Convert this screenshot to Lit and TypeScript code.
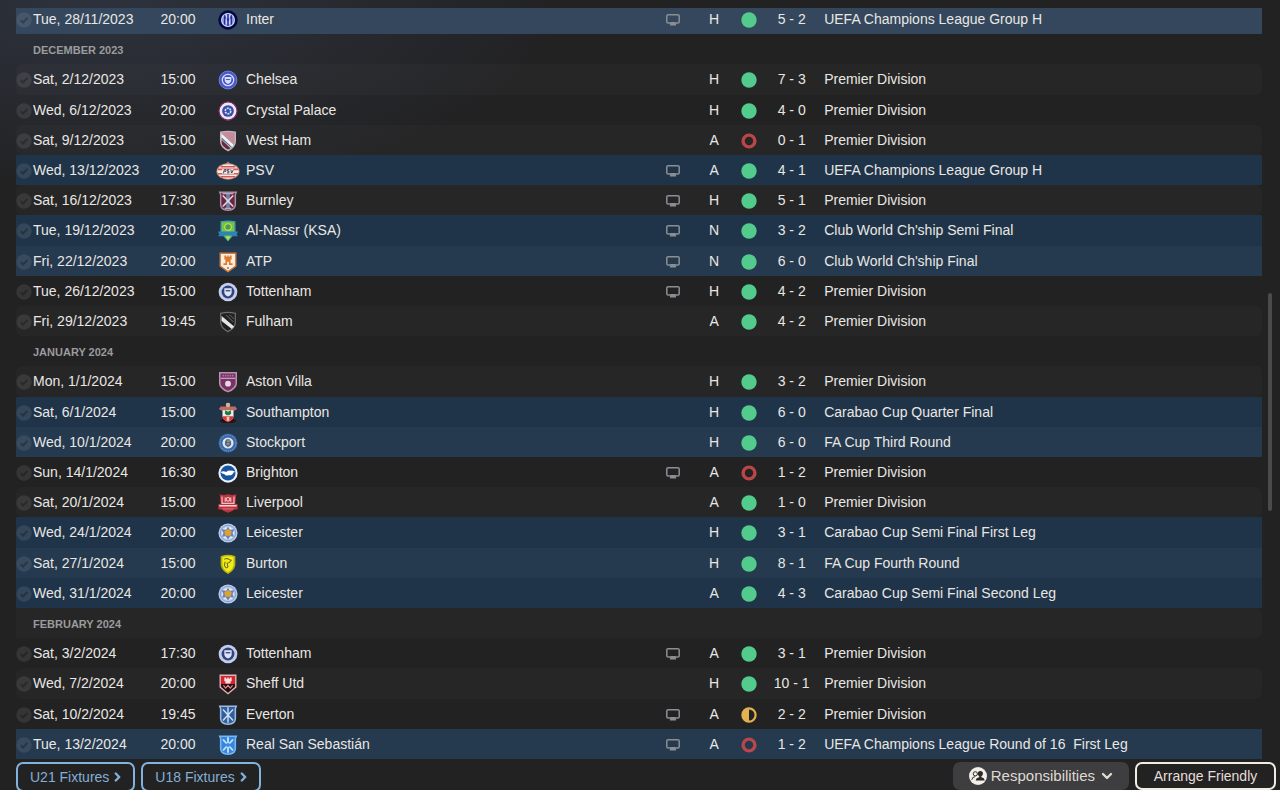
import { LitElement, html, svg, css, nothing, TemplateResult } from "lit";
import { customElement, property } from "lit/decorators.js";
import { classMap } from "lit/directives/class-map.js";

type Result = "win" | "loss" | "draw";
interface Fixture {
  date: string; time: string; team: string; crest: string; tv?: boolean;
  venue: "H" | "A" | "N"; result: Result; score: string; comp: string; cup?: boolean; active?: boolean;
}
interface Month { title?: string; fixtures: Fixture[]; }

const PL = "Premier Division";
const CL = "UEFA Champions League Group H";

const MONTHS: Month[] = [
  { fixtures: [
    { date: "Tue, 28/11/2023", time: "20:00", team: "Inter", crest: "inter", tv: true, venue: "H", result: "win", score: "5 - 2", comp: CL, cup: true, active: true },
  ] },
  { title: "DECEMBER 2023", fixtures: [
    { date: "Sat, 2/12/2023", time: "15:00", team: "Chelsea", crest: "chelsea", venue: "H", result: "win", score: "7 - 3", comp: PL },
    { date: "Wed, 6/12/2023", time: "20:00", team: "Crystal Palace", crest: "palace", venue: "H", result: "win", score: "4 - 0", comp: PL },
    { date: "Sat, 9/12/2023", time: "15:00", team: "West Ham", crest: "westham", venue: "A", result: "loss", score: "0 - 1", comp: PL },
    { date: "Wed, 13/12/2023", time: "20:00", team: "PSV", crest: "psv", tv: true, venue: "A", result: "win", score: "4 - 1", comp: CL, cup: true },
    { date: "Sat, 16/12/2023", time: "17:30", team: "Burnley", crest: "burnley", tv: true, venue: "H", result: "win", score: "5 - 1", comp: PL },
    { date: "Tue, 19/12/2023", time: "20:00", team: "Al-Nassr (KSA)", crest: "nassr", tv: true, venue: "N", result: "win", score: "3 - 2", comp: "Club World Ch'ship Semi Final", cup: true },
    { date: "Fri, 22/12/2023", time: "20:00", team: "ATP", crest: "atp", tv: true, venue: "N", result: "win", score: "6 - 0", comp: "Club World Ch'ship Final", cup: true },
    { date: "Tue, 26/12/2023", time: "15:00", team: "Tottenham", crest: "tottenham", tv: true, venue: "H", result: "win", score: "4 - 2", comp: PL },
    { date: "Fri, 29/12/2023", time: "19:45", team: "Fulham", crest: "fulham", venue: "A", result: "win", score: "4 - 2", comp: PL },
  ] },
  { title: "JANUARY 2024", fixtures: [
    { date: "Mon, 1/1/2024", time: "15:00", team: "Aston Villa", crest: "villa", venue: "H", result: "win", score: "3 - 2", comp: PL },
    { date: "Sat, 6/1/2024", time: "15:00", team: "Southampton", crest: "southampton", venue: "H", result: "win", score: "6 - 0", comp: "Carabao Cup Quarter Final", cup: true },
    { date: "Wed, 10/1/2024", time: "20:00", team: "Stockport", crest: "stockport", venue: "H", result: "win", score: "6 - 0", comp: "FA Cup Third Round", cup: true },
    { date: "Sun, 14/1/2024", time: "16:30", team: "Brighton", crest: "brighton", tv: true, venue: "A", result: "loss", score: "1 - 2", comp: PL },
    { date: "Sat, 20/1/2024", time: "15:00", team: "Liverpool", crest: "liverpool", venue: "A", result: "win", score: "1 - 0", comp: PL },
    { date: "Wed, 24/1/2024", time: "20:00", team: "Leicester", crest: "leicester", venue: "H", result: "win", score: "3 - 1", comp: "Carabao Cup Semi Final First Leg", cup: true },
    { date: "Sat, 27/1/2024", time: "15:00", team: "Burton", crest: "burton", venue: "H", result: "win", score: "8 - 1", comp: "FA Cup Fourth Round", cup: true },
    { date: "Wed, 31/1/2024", time: "20:00", team: "Leicester", crest: "leicester", venue: "A", result: "win", score: "4 - 3", comp: "Carabao Cup Semi Final Second Leg", cup: true },
  ] },
  { title: "FEBRUARY 2024", fixtures: [
    { date: "Sat, 3/2/2024", time: "17:30", team: "Tottenham", crest: "tottenham", tv: true, venue: "A", result: "win", score: "3 - 1", comp: PL },
    { date: "Wed, 7/2/2024", time: "20:00", team: "Sheff Utd", crest: "sheffield", venue: "H", result: "win", score: "10 - 1", comp: PL },
    { date: "Sat, 10/2/2024", time: "19:45", team: "Everton", crest: "everton", tv: true, venue: "A", result: "draw", score: "2 - 2", comp: PL },
    { date: "Tue, 13/2/2024", time: "20:00", team: "Real San Sebastián", crest: "sebastian", tv: true, venue: "A", result: "loss", score: "1 - 2", comp: "UEFA Champions League Round of 16  First Leg", cup: true },
  ] },
];

const shield = "M4 2.5Q12 .5 20 2.5V12Q20 18.5 12 22.5Q4 18.5 4 12Z";
const tub = "M3 2.5H21L20 5V16Q20 21.5 12 22Q4 21.5 4 16V5Z";

const CRESTS: Record<string, TemplateResult> = {
  inter: svg`<circle cx="12" cy="12" r="10.6" fill="#04083f"/><circle cx="12" cy="12" r="7.6" fill="#e0e4ff"/><circle cx="12" cy="12" r="6.6" fill="#8d9bea"/><path d="M8.3 17V8L12 13l3.7-5v9M12 5.5v13" fill="none" stroke="#262f95" stroke-width="1.5"/><path d="M10.2 6.5v10M13.8 6.5v10" stroke="#eef0ff" stroke-width=".9"/>`,
  chelsea: svg`<circle cx="12" cy="12" r="10" fill="#4659c5"/><circle cx="12" cy="12" r="9.7" fill="none" stroke="#6e80e2" stroke-width="1"/><circle cx="12" cy="12" r="6.2" fill="#4051b4" stroke="#d6dcff" stroke-width="1.4"/><path d="M8.3 8.8h7.4v2.9q0 3-3.7 4.6-3.7-1.6-3.7-4.6z" fill="#d6dcff"/><path d="M9.7 11.5h4.6" stroke="#4051b4" stroke-width="1"/>`,
  palace: svg`<circle cx="12" cy="12" r="10" fill="#ece5f5"/><circle cx="12" cy="12" r="9.9" fill="none" stroke="#7b2458" stroke-width="1.4"/><circle cx="12" cy="12" r="6.4" fill="#3450a8"/><circle cx="12" cy="12" r="3" fill="#3450a8" stroke="#e8e2f4" stroke-width="1.8" stroke-dasharray="2.2 .9"/>`,
  westham: svg`<path d=${shield} fill="#c58b9d"/><path d="M5 8L16.500 19.500 12 21.500 5 17z" fill="#6b2742"/><path d="M4.500 3.500L19 17l-3.500 3.500L4.500 10z" fill="#eef1f3"/><path d="M5 9L16.500 19.500" stroke="#467087" stroke-width="1.2"/><path d=${shield} fill="none" stroke="#bdb5bd" stroke-width="1.5"/>`,
  psv: svg`<path d="M9 4.5L12 1.500l3 3z" fill="#b98474"/><ellipse cx="12" cy="12.5" rx="12.6" ry="9" fill="#b98a72"/><ellipse cx="12" cy="12.5" rx="11.6" ry="8" fill="#f4efed"/><path d="M4 7.300H20M1 10.200H23M1 15H23M4 18.200H20" stroke="#d9544c" stroke-width="1.7"/><path d="M5.500 10h13v5h-13z" fill="#f4efed"/><path d="M7 14.500l1-4h2l-.5 2H8M11 14h2v-1.800h-1.500v-1.700h2M15 10.500l1 3.700 2-3.700" fill="none" stroke="#34374f" stroke-width="1"/>`,
  burnley: svg`<path d=${tub} fill="#6a2540" stroke="#aa8fa6" stroke-width="1.6"/><path d="M12 3v18" stroke="#6686a8" stroke-width="4"/><path d="M6.3 6l11.4 12M17.7 6L6.3 18" stroke="#e4d3dc" stroke-width="1.8"/><path d="M8.5 20h7M6 4h12" stroke="#baa9bf" stroke-width="1.2"/>`,
  nassr: svg`<path d="M4.5 2Q12 .5 19.5 2V14L12 22.5 4.5 14z" fill="#77c24c" stroke="#3fa0a2" stroke-width="1.4"/><circle cx="12" cy="7.7" r="3.6" fill="#4a9b55" stroke="#c5e34c" stroke-width="1.3"/><path d="M1 12.5h22l-1.5 3.3 1.5 2H16v-1H8v1H1l1.5-2z" fill="#2d82b7"/><path d="M9 18h6l-3 4z" fill="#b4e349"/>`,
  atp: svg`<path d="M3.5 2.5h17V16.5L12 22.5 3.5 16.5z" fill="#f9ede2" stroke="#cc7b3c" stroke-width="1.5"/><path d="M8 5h2v1.2h1.2V5h1.6v1.2H14V5h2v4.3h-1.2v4H17v2h-4v-3.6h-2v3.6H7v-2h2.2v-4H8z" fill="#dd7a31"/><path d="M11 17.5h2v2h-2z" fill="#c98550"/>`,
  tottenham: svg`<circle cx="12" cy="12" r="10.2" fill="#c3cdee"/><circle cx="12" cy="12" r="7" fill="#31447b"/><path d="M8 8h8v4.2q0 3-4 4.8-4-1.8-4-4.8z" fill="#dce3f8"/><path d="M9.5 10.6h5" stroke="#31447b" stroke-width="1.4"/>`,
  fulham: svg`<path d=${shield} fill="#202020" stroke="#6c6c6c" stroke-width="1.4"/><path d="M5 5.500L18.7 17l-2.500 2.700L5 11z" fill="#e6e6e6"/><path d="M10 4.5l8 7.5M13.5 4l5 4.5" stroke="#555" stroke-width="1.2"/>`,
  villa: svg`<path d="M3 2h18v11q0 6-9 9.5Q3 19 3 13z" fill="#793263" stroke="#b890b3" stroke-width="1.7"/><path d="M4 8h16" stroke="#c4a0c2" stroke-width="1.4"/><path d="M6 5h12" stroke="#b277a4" stroke-width="1.8" stroke-dasharray="1.6 1"/><circle cx="12" cy="13.8" r="3.2" fill="#e5d8e8"/>`,
  southampton: svg`<ellipse cx="12" cy="20.5" rx="9" ry="2.5" fill="#33100d"/><path d="M10 1h4v4h6l2 3-5 2H7L2 8l2-3h6z" fill="#bd6d62"/><circle cx="12" cy="3.2" r="2.4" fill="#d6b393"/><path d="M6 9h12v7q-1 4-6 5.5Q7 20 6 16z" fill="#f3eeea"/><path d="M6 15.500h12q-1 4.500-6 6-5-1.500-6-6z" fill="#d33c35"/><path d="M10.500 16h3v4.500h-3z" fill="#f0c5bb"/><path d="M9 9l3 1.500L15 9l.5 3.500-2 2h-3l-2-2z" fill="#257a43"/>`,
  stockport: svg`<circle cx="12" cy="12" r="10.3" fill="#3a66a4"/><circle cx="12" cy="12" r="8.7" fill="none" stroke="#6f98cf" stroke-width="1.2" stroke-dasharray="1.5 1"/><circle cx="12" cy="12" r="6.1" fill="#dce5f1"/><path d="M8.7 10.5l1.8-2.5h3.2l1.7 2.5v3.8L12 16.7l-3.3-2.4z" fill="#48658d"/><path d="M11 10h3M10.5 13h3" stroke="#cba95b" stroke-width="1.2"/>`,
  brighton: svg`<circle cx="12" cy="12" r="10.5" fill="#e8f2ff"/><circle cx="12" cy="12" r="8.2" fill="#17549e"/><path d="M4 11q3-1.6 6 0 2-2 5-1.5 1.5-.8 3 .2l2 1.3-2 .4q-1 3.3-5.5 3.1Q9 15.4 8 13 6 13.3 4 11z" fill="#fff"/>`,
  liverpool: svg`<path d="M3 2.5Q7 4 12 2.5 17 4 21 2.5L20 13h2.5v6H19q-2.5 2-7 3.5Q7.5 21 5 19H1.5v-6H4z" fill="#bd3440"/><path d="M5.5 5v7.5h13V5M9 6v4.5M15 6v4.5" fill="none" stroke="#efc0c3" stroke-width="1.3"/><circle cx="12" cy="8" r="2" fill="none" stroke="#f3c8ca" stroke-width="1.2"/><path d="M2.5 15h19" stroke="#f5d5d7" stroke-width="1.7"/><path d="M6 18.5h12" stroke="#df7d84" stroke-width="1"/>`,
  leicester: svg`<circle cx="12" cy="12" r="10.4" fill="#bacced"/><circle cx="12" cy="12" r="8.4" fill="none" stroke="#8099cc" stroke-width="1"/><circle cx="12" cy="12" r="6.5" fill="#e8ecf5"/><path d="M12 5l2 3.5 5-.5-2 4 1.5 4-4-.5L12 19l-2.5-3.5-4 .5L7 12 5 8l5 .5z" fill="#6683bd"/><path d="M12 7.5l4 2.5-1.2 5H9.2L8 10z" fill="#dfa329"/>`,
  burton: svg`<path d="M4 3.5Q12 .5 20 3.5V13q-1 6-8 10Q5 19 4 13z" fill="#b8b60d"/><path d="M6 4.7Q12 2.5 18 4.7V13q-1 5-6 8-5-3-6-8z" fill="#f2ed1a"/><path d="M8 7q3-2 5 0l2.5 1-2 2.500-2.500.5 1 4-2 1.500M9 9.500l-1 3.500 1.500 3" fill="none" stroke="#6a6816" stroke-width="1.1"/>`,
  sheffield: svg`<path d="M3.5 2.5h17V15.5L12 22.5 3.5 15.5z" fill="#d3252f" stroke="#dfb5b7" stroke-width="1.5"/><path d="M4.5 12h15v3L12 21.5 4.5 15z" fill="#1d1213"/><path d="M8 5h2v1.2h1.2V5h1.6v1.2H14V5h2v4h-1.2v2.5H9.2V9H8z" fill="#f6dfe0"/><path d="M7 13.5l2.5 3 2.5-3 2.5 3 2.5-3" fill="none" stroke="#e9888c" stroke-width="1.3"/>`,
  everton: svg`<path d=${tub} fill="#315f9d" stroke="#9bbbe2" stroke-width="1.7"/><path d="M12 3.5v17M6.5 6l5.5 6 5.5-6M12 12l-5.5 6M12 12l5.5 6" fill="none" stroke="#cfe0f6" stroke-width="1.5"/>`,
  sebastian: svg`<path d=${tub} fill="#3487df" stroke="#7bb6f2" stroke-width="1.7"/><path d="M12 3.5v17M6.5 6l11 12M17.5 6l-11 12" stroke="#c4e2fc" stroke-width="2"/><circle cx="12" cy="12" r="2.3" fill="#3b8ce1"/>`,
};

const check = html`<svg class="check" viewBox="0 0 16 16" aria-hidden="true"><circle cx="8" cy="8" r="7.7"/><path d="M4.8 8.2l2.3 2.3 4.4-4.600"/></svg>`;
const tvIcon = html`<svg class="tv" viewBox="0 0 14 12" role="img" aria-label="Televised"><rect x=".8" y=".8" width="12.4" height="8.2" rx="1.3"/><path class="stand" d="M4.6 8h4.8l.8 3.400H3.8z"/></svg>`;
const status: Record<Result, TemplateResult> = {
  win: html`<svg class="status" viewBox="0 0 16 16" role="img" aria-label="Won"><circle cx="8" cy="8" r="7.7" fill="#52cb8d"/></svg>`,
  loss: html`<svg class="status" viewBox="0 0 16 16" role="img" aria-label="Lost"><circle cx="8" cy="8" r="5.9" fill="none" stroke="#b94749" stroke-width="3.4"/></svg>`,
  draw: html`<svg class="status" viewBox="0 0 16 16" role="img" aria-label="Drawn"><circle cx="8" cy="8" r="6.6" fill="none" stroke="#e3b14f" stroke-width="2.2"/><path d="M8 1.5a6.5 6.5 0 0 0 0 13z" fill="#e3b14f"/></svg>`,
};

@customElement("fixture-list")
class FixtureList extends LitElement {
  @property({ attribute: false }) months: Month[] = [];

  static styles = css`
    :host { display: block; overflow: hidden; }
    table {
      width: 100%; height: calc(100% + 4px); margin-top: -4px;
      table-layout: fixed; border-collapse: separate; border-spacing: 0;
      font-size: 14px; line-height: 20px; color: #e9e7e3;
    }
    .c-check { width: 17px; } .c-date { width: 113px; } .c-time { width: 64px; }
    .c-crest { width: 36px; } .c-team { width: 33%; } .c-tv { width: 32px; }
    .c-venue { width: 50px; } .c-result { width: 20px; } .c-score { width: 65px; }
    td, th { box-sizing: border-box; padding: 0; height: 30px; text-align: left; white-space: pre; vertical-align: middle; font-weight: 400; }
    .light > * { background: rgba(255, 255, 255, 0.02); }
    .light > :first-child { border-radius: 6px 0 0 6px; }
    .light > :last-child { border-radius: 0 6px 6px 0; }
    .cup > * { background: #203449; }
    .cup.light > * { background: #25394f; border-radius: 0; }
    .cup.active > * { background: #34475d; }
    .month th { padding: 2px 0 0 17px; font-size: 11px; font-weight: 700; color: #9b9b9c; }
    td.mid { text-align: center; }
    td.icon { padding-top: 2px; }
    svg { display: block; overflow: visible; }
    .icon svg { margin: 0 auto; }
    .icon .check { width: 16px; height: 16px; margin: 0; }
    .check circle { fill: rgba(255, 255, 255, 0.09); }
    .check path { fill: none; stroke: rgba(0, 0, 0, 0.28); stroke-width: 2; }
    .crest { width: 22px; height: 22px; }
    .tv { width: 14px; height: 12px; }
    .tv rect { fill: none; stroke: #8b8f94; stroke-width: 1.5; }
    .stand { fill: #8b8f94; }
    .status { width: 16px; height: 16px; }
  `;

  private row(f: Fixture, light: boolean) {
    return html`<tr class=${classMap({ light, cup: !!f.cup, active: !!f.active })}>
      <td class="icon">${check}</td>
      <td>${f.date}</td>
      <td class="mid">${f.time}</td>
      <td class="icon"><svg class="crest" viewBox="0 0 24 24" aria-hidden="true">${CRESTS[f.crest]}</svg></td>
      <td>${f.team}</td>
      <td class="icon">${f.tv ? tvIcon : nothing}</td>
      <td class="mid">${f.venue}</td>
      <td class="icon">${status[f.result]}</td>
      <td class="mid">${f.score}</td>
      <td>${f.comp}</td>
    </tr>`;
  }

  render() {
    let n = 0;
    return html`<table aria-label="Fixtures">
      <colgroup>
        <col class="c-check"><col class="c-date"><col class="c-time"><col class="c-crest"><col class="c-team">
        <col class="c-tv"><col class="c-venue"><col class="c-result"><col class="c-score"><col>
      </colgroup>
      ${this.months.map((m) => html`<tbody>
        ${m.title ? html`<tr class=${classMap({ month: true, light: n++ % 2 === 0 })}><th colspan="10" scope="rowgroup">${m.title}</th></tr>` : nothing}
        ${m.fixtures.map((f) => this.row(f, n++ % 2 === 0))}
      </tbody>`)}
    </table>`;
  }
}

@customElement("app-root")
class AppRoot extends LitElement {
  static styles = css`
    :host {
      display: flex; flex-direction: column; box-sizing: border-box; height: 100vh; overflow: hidden;
      padding-top: 8px; font-family: "Liberation Sans", Arial, sans-serif;
      background: radial-gradient(ellipse 36% 24% at 8% 0, #2d323d, rgba(45, 50, 61, 0)) #222223;
    }
    main { flex: 1; min-height: 0; display: flex; padding-left: 16px; padding-right: 8px; gap: 6px; }
    fixture-list { flex: 1; min-width: 0; }
    .track { width: 4px; display: grid; grid-template-rows: 38fr 29fr 33fr; }
    .thumb { grid-row: 2; border-radius: 2px; background: #4b4b4d; }
    footer { flex: none; height: 31px; box-sizing: border-box; padding: 3px 4px 0 16px; display: flex; justify-content: space-between; align-items: flex-start; }
    .group { display: flex; gap: 6px; }
    button {
      display: flex; align-items: center; justify-content: center; box-sizing: border-box; height: 28px; margin: 0; padding: 0 12px;
      font: 14px/20px "Liberation Sans", Arial, sans-serif; border-radius: 7px; border: 2px solid; background: none; white-space: nowrap;
    }
    .squad { height: 30px; gap: 5px; color: #83afd6; border-color: #82b3de; }
    .menu { background: #3e3d3f; border-color: #3e3d3f; color: #dedad3; font-size: 15px; padding: 0 14px; gap: 4px; }
    .menu .down { margin-left: 2px; }
    .plain { color: #e4dfd8; border-color: #f1ece4; min-width: 141px; }
    svg { display: block; }
    .next { width: 7px; height: 10px; }
    .down { width: 12px; height: 8px; }
    .people { width: 18px; height: 18px; }
    .line { fill: none; stroke: currentColor; stroke-width: 2.4; stroke-linecap: round; stroke-linejoin: round; }
  `;

  private squad(label: string) {
    return html`<button class="squad" type="button">${label}<svg class="next" viewBox="0 0 7 10" aria-hidden="true"><path class="line" d="M1.8 1.5L5.2 5 1.8 8.5"/></svg></button>`;
  }

  render() {
    return html`
      <main>
        <fixture-list .months=${MONTHS}></fixture-list>
        <div class="track"><div class="thumb"></div></div>
      </main>
      <footer>
        <div class="group">${this.squad("U21 Fixtures")}${this.squad("U18 Fixtures")}</div>
        <div class="group">
          <button class="menu" type="button">
            <svg class="people" viewBox="0 0 18 18" aria-hidden="true"><circle cx="9" cy="9" r="9" fill="#f3efe7"/><circle cx="6.3" cy="6.8" r="2.1" fill="none" stroke="#33312f" stroke-width="1"/><path d="M2.8 12.8q.3-3 3.4-3.2" fill="none" stroke="#33312f" stroke-width="1"/><circle cx="11.3" cy="6.5" r="2.6" fill="#2c2a29"/><path d="M6.8 13.5q.2-2.6 3.4-3.2V8.5h2.2v1.8q3 .6 3.2 3.2z" fill="#2c2a29"/></svg>
            Responsibilities
            <svg class="down" viewBox="0 0 12 8" aria-hidden="true"><path class="line" d="M2 2l4 4 4-4"/></svg>
          </button>
          <button class="plain" type="button">Arrange Friendly</button>
        </div>
      </footer>`;
  }
}
